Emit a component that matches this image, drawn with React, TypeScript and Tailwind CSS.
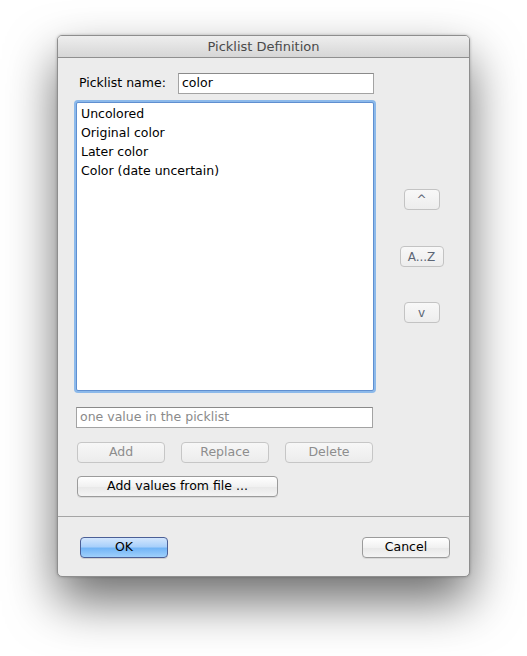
import React from "react";

const font = { fontFamily: '"DejaVu Sans", "Lucida Grande", sans-serif' };

function MacButton({ label, disabled, primary, className = "" }: { label: string; disabled?: boolean; primary?: boolean; className?: string }) {
  const base = "flex h-[21px] items-center justify-center rounded-[4px] border text-[12.5px] leading-none";
  if (primary) {
    return (
      <button className={`${base} border-[#4b5f96] bg-[linear-gradient(to_bottom,#d3e6fd_0%,#a9d0fb_45%,#73b5f6_55%,#9fd0fb_100%)] text-black shadow-[0_1px_0_rgba(0,0,0,0.12)] ${className}`}>{label}</button>
    );
  }
  if (disabled) {
    return (
      <button className={`${base} border-[#c6c6c6] bg-[linear-gradient(to_bottom,#f7f7f7,#ececec)] text-[#8d8d8d] ${className}`}>{label}</button>
    );
  }
  return (
    <button className={`${base} border-[#9b9b9b] bg-[linear-gradient(to_bottom,#ffffff,#f1f1f1_50%,#e8e8e8_51%,#f4f4f4)] text-black shadow-[0_1px_0_rgba(0,0,0,0.08)] ${className}`}>{label}</button>
  );
}

function SmallButton({ label, className = "" }: { label: string; className?: string }) {
  return (
    <button className={`flex h-[21px] items-center justify-center rounded-[4px] border border-[#c3c3c3] bg-[linear-gradient(to_bottom,#f8f8f8,#ededed)] text-[12px] leading-none text-[#5d6675] ${className}`}>{label}</button>
  );
}

export default function App() {
  const values = ["Uncolored", "Original color", "Later color", "Color (date uncertain)"];
  return (
    <div className="min-h-[656px] w-[527px] bg-white pl-[57px] pt-[35px]" style={font}>
      <div className="flex h-[542px] w-[413px] flex-col overflow-hidden rounded-[5px] border border-[#8e8e8e] bg-[#ececec] shadow-[0_24px_50px_rgba(0,0,0,0.58),0_0_3px_rgba(0,0,0,0.25)]">
        {/* title bar */}
        <div className="flex h-[22px] shrink-0 items-center justify-center border-b border-[#8f8f8f] bg-[linear-gradient(to_bottom,#eeeeee,#d6d6d6)] text-[13px] text-[#4a4a4a]">
          Picklist Definition
        </div>

        <div className="flex flex-1 flex-col">
          <div className="flex">
            {/* left column */}
            <div className="ml-[18px] flex w-[298px] flex-col">
              <div className="mt-[15px] flex items-center">
                <span className="ml-[3px] w-[99px] text-[12.5px] text-black">Picklist name:</span>
                <div className="flex h-[21px] w-[196px] items-center border border-[#a3a3a3] border-t-[#8a8a8a] bg-white px-[3px] text-[12.5px] text-black">color</div>
              </div>

              <div className="mt-[8px] h-[289px] w-[298px] rounded-[2px] border border-[#5f8fd0] bg-white px-[4px] pt-[1px] shadow-[0_0_0_2px_#8cb9ea]">
                {values.map((v) => (
                  <div key={v} className="h-[19px] text-[12.5px] leading-[19px] text-black">{v}</div>
                ))}
              </div>

              <div className="mt-[16px] flex h-[21px] w-[297px] items-center border border-[#a3a3a3] border-t-[#8a8a8a] bg-white px-[3px] text-[12.5px] text-[#8a8a8a]">
                one value in the picklist
              </div>

              <div className="mt-[14px] flex gap-[16px] pl-[1px]">
                <MacButton label="Add" disabled className="w-[88px]" />
                <MacButton label="Replace" disabled className="w-[88px]" />
                <MacButton label="Delete" disabled className="w-[88px]" />
              </div>

              <div className="mt-[13px] pl-[1px]">
                <MacButton label="Add values from file ..." className="w-[201px]" />
              </div>
            </div>

            {/* right column */}
            <div className="flex flex-1 flex-col items-center pt-[131px]">
              <SmallButton label="^" className="w-[36px]" />
              <SmallButton label="A...Z" className="mt-[36px] w-[44px]" />
              <SmallButton label="v" className="mt-[35px] w-[36px]" />
            </div>
          </div>

          <div className="mt-[19px] border-t border-[#a5a5a5]" />

          <div className="mt-[20px] flex justify-between pl-[22px] pr-[19px]">
            <MacButton label="OK" primary className="w-[88px]" />
            <MacButton label="Cancel" className="w-[88px]" />
          </div>
        </div>
      </div>
    </div>
  );
}
